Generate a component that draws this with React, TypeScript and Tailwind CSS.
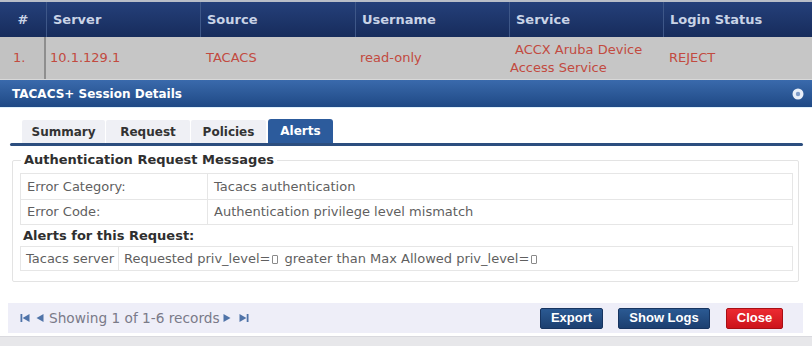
import React from "react";

const cols = "grid grid-cols-[46px_154px_155px_154px_154px_1fr]";

function CloseIcon() {
  return (
    <svg width="12" height="12" viewBox="0 0 12 12">
      <circle cx="6" cy="6" r="5.5" fill="#e8eef8" />
      <circle cx="6" cy="6" r="2.2" fill="#7f9cc8" />
    </svg>
  );
}

function First() {
  return (
    <svg width="10" height="10" viewBox="0 0 10 10">
      <rect x="0.5" y="1" width="1.8" height="8" fill="#4f73a8" />
      <path d="M9.5 1 L2.6 5 L9.5 9 Z" fill="#4f73a8" />
    </svg>
  );
}
function Prev() {
  return (
    <svg width="8" height="10" viewBox="0 0 8 10">
      <path d="M7.5 1 L0.5 5 L7.5 9 Z" fill="#4f73a8" />
    </svg>
  );
}
function Next() {
  return (
    <svg width="8" height="10" viewBox="0 0 8 10">
      <path d="M0.5 1 L7.5 5 L0.5 9 Z" fill="#4f73a8" />
    </svg>
  );
}
function Last() {
  return (
    <svg width="10" height="10" viewBox="0 0 10 10">
      <path d="M0.5 1 L7.4 5 L0.5 9 Z" fill="#4f73a8" />
      <rect x="7.7" y="1" width="1.8" height="8" fill="#4f73a8" />
    </svg>
  );
}

function Box() {
  return <span className="inline-block w-[6px] h-[9px] border border-[#8a8a8a] rounded-[1px] mx-[2px] align-[-1px]" />;
}

export default function App() {
  return (
    <div
      className="w-[812px] h-[346px] overflow-hidden bg-white relative"
      style={{ fontFamily: '"DejaVu Sans", Verdana, sans-serif' }}
    >
      {/* Background table */}
      <div className="border-t-2 border-[#b9bec8]">
        <div className={`${cols} h-[35px] bg-gradient-to-b from-[#25407a] to-[#172c5c] text-[13px] font-bold text-[#c9d3e6]`}>
          <div className="flex items-center justify-center">#</div>
          <div className="flex items-center pl-[6px] border-l border-[#3e5788]">Server</div>
          <div className="flex items-center pl-[6px] border-l border-[#3e5788]">Source</div>
          <div className="flex items-center pl-[6px] border-l border-[#3e5788]">Username</div>
          <div className="flex items-center pl-[6px] border-l border-[#3e5788]">Service</div>
          <div className="flex items-center pl-[6px] border-l border-[#3e5788]">Login Status</div>
        </div>
        <div className={`${cols} h-[43px] bg-[#c6c6c6] text-[13px] text-[#c24a40] border-b border-[#d8d8d8]`}>
          <div className="flex items-center pl-[13px] border-r-2 border-[#8e8e8e] bg-[#c2c2c2]">1.</div>
          <div className="flex items-center pl-[4px]">10.1.129.1</div>
          <div className="flex items-center pl-[6px]">TACACS</div>
          <div className="flex items-center pl-[5px]">read-only</div>
          <div className="flex flex-col justify-center leading-[18px] pt-[1px]">
            <span className="pl-[6px]">ACCX Aruba Device</span>
            <span className="pl-[1px]">Access Service</span>
          </div>
          <div className="flex items-center pl-[6px]">REJECT</div>
        </div>
      </div>

      {/* Dialog title bar */}
      <div className="h-[28px] bg-gradient-to-b from-[#3a6aac] to-[#1f4985] flex items-center justify-between pl-[12px] pr-[8px] border-b border-[#dff0fb]">
        <span className="text-[12px] font-bold text-white">TACACS+ Session Details</span>
        <CloseIcon />
      </div>

      {/* Dialog body */}
      <div className="pt-[11px] px-[10px]">
        {/* Tabs */}
        <div className="flex pl-[12px] h-[24px] items-end">
          <div className="h-[23px] w-[83px] mr-[1px] flex items-center justify-center bg-[#eff0f5] text-[12px] font-bold text-[#333333] rounded-t-[2px]">Summary</div>
          <div className="h-[23px] w-[84px] mr-[1px] flex items-center justify-center bg-[#eff0f5] text-[12px] font-bold text-[#333333] rounded-t-[2px]">Request</div>
          <div className="h-[23px] w-[75px] mr-[2px] flex items-center justify-center bg-[#eff0f5] text-[12px] font-bold text-[#333333] rounded-t-[2px]">Policies</div>
          <div className="h-[24px] w-[65px] flex items-center justify-center bg-[#2c5b9c] text-[12px] font-bold text-white rounded-t-[3px]">Alerts</div>
        </div>
        <div className="h-[3px] w-[793px] bg-[#2c4e7f] rounded-full" />

        {/* Fieldset */}
        <div className="relative mt-[14px] ml-[2px] w-[787px] h-[122px] border border-[#e3e3e3] rounded-[2px] px-[7px] pt-[12px]">
          <div className="absolute left-[8px] top-[-10px] bg-white px-[3px] text-[13px] font-bold text-[#2f2f2f] leading-[18px]">
            Authentication Request Messages
          </div>
          <div className="border border-[#e6e6e6] text-[13px] text-[#5f5f5f] w-[773px]">
            <div className="flex h-[26px] border-b border-[#e6e6e6]">
              <div className="w-[187px] border-r border-[#e6e6e6] flex items-center pl-[6px]">Error Category:</div>
              <div className="flex items-center pl-[6px]">Tacacs authentication</div>
            </div>
            <div className="flex h-[24px]">
              <div className="w-[187px] border-r border-[#e6e6e6] flex items-center pl-[6px]">Error Code:</div>
              <div className="flex items-center pl-[6px]">Authentication privilege level mismatch</div>
            </div>
          </div>
          <div className="text-[13px] font-bold text-[#2f2f2f] h-[21px] flex items-center pl-[3px]">
            Alerts for this Request:
          </div>
          <div className="flex h-[25px] border border-[#e6e6e6] text-[13px] text-[#5f5f5f] w-[773px]">
            <div className="w-[98px] border-r border-[#e6e6e6] flex items-center pl-[5px]">Tacacs server</div>
            <div className="flex items-center pl-[5px]">
              <span className="whitespace-pre">
                Requested priv_level=<Box />{" "}greater than Max Allowed priv_level=<Box />
              </span>
            </div>
          </div>
        </div>
      </div>

      {/* Footer */}
      <div className="mt-[21px] ml-[8px] w-[795px] h-[30px] bg-[#eeeef8] flex items-center justify-between pl-[12px] pr-[20px]">
        <div className="flex items-center text-[13.7px] text-[#7a7a88]">
          <First />
          <span className="w-[6px]" />
          <Prev />
          <span className="ml-[5px]">Showing 1 of 1-6 records</span>
          <span className="w-[3px]" />
          <Next />
          <span className="w-[8px]" />
          <Last />
        </div>
        <div className="flex items-center" style={{ fontFamily: '"Liberation Sans", Arial, sans-serif' }}>
          <div className="w-[63px] h-[21px] flex items-center justify-center bg-gradient-to-b from-[#2b5a93] to-[#1c3f70] border border-[#173460] rounded-[2px] text-white text-[13px] font-bold">Export</div>
          <div className="w-[92px] h-[21px] ml-[15px] flex items-center justify-center bg-gradient-to-b from-[#2b5a93] to-[#1c3f70] border border-[#173460] rounded-[2px] text-white text-[13px] font-bold">Show Logs</div>
          <div className="w-[57px] h-[21px] ml-[16px] flex items-center justify-center bg-gradient-to-b from-[#ec2a31] to-[#cc131b] border border-[#a80f15] rounded-[2px] text-white text-[13px] font-bold">Close</div>
        </div>
      </div>

      {/* Bottom strip */}
      <div className="mt-[3px] h-[20px] bg-[#e7e7ea] border-t border-[#d9d9de]" />
    </div>
  );
}
